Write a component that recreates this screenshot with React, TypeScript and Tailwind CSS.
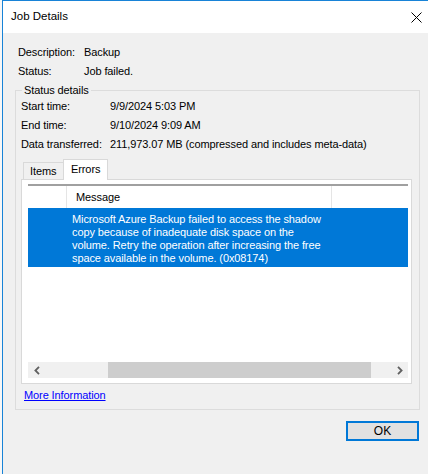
import React from "react";

const font = { fontFamily: '"Liberation Sans", Arial, sans-serif' };

function Chevron({ dir }: { dir: "left" | "right" }) {
  return (
    <svg width="6" height="9" viewBox="0 0 6 9">
      {dir === "left" ? (
        <path d="M5 0.8 L1.4 4.5 L5 8.2" fill="none" stroke="#606060" strokeWidth="1.8" />
      ) : (
        <path d="M1 0.8 L4.6 4.5 L1 8.2" fill="none" stroke="#606060" strokeWidth="1.8" />
      )}
    </svg>
  );
}

export default function App() {
  return (
    <div
      className="w-[428px] h-[474px] flex bg-white overflow-hidden text-[11px] tracking-[-0.1px] text-black"
      style={font}
    >
      <div className="w-[2px] shrink-0 bg-[#f7f7f7]" />
      <div className="flex-1 flex flex-col border-l border-t border-[#1883d7]">
        {/* Title bar */}
        <div className="h-[32px] shrink-0 bg-white flex items-center justify-between pl-[8px] pr-[6px]">
          <span className="text-[11.5px] tracking-normal">Job Details</span>
          <svg width="11" height="11" viewBox="0 0 11 11">
            <path d="M0.5 0.5 L10.5 10.5 M10.5 0.5 L0.5 10.5" stroke="#000" strokeWidth="1" />
          </svg>
        </div>

        {/* Body */}
        <div className="flex-1 bg-[#f0f0f0] flex flex-col pt-[10px]">
          <div className="pl-[15px] flex flex-col">
            <div className="h-[19px] flex items-center">
              <span className="w-[66px]">Description:</span>
              <span>Backup</span>
            </div>
            <div className="h-[19px] flex items-center">
              <span className="w-[66px]">Status:</span>
              <span>Job failed.</span>
            </div>
          </div>

          <fieldset className="ml-[12px] mt-[2px] w-[405px] border border-[#dcdcdc] pb-[6px]">
            <legend className="ml-[6px] px-[2px] leading-[14px]">Status details</legend>
            <div className="pl-[5px] flex flex-col">
              <div className="h-[19px] flex items-center">
                <span className="w-[89px]">Start time:</span>
                <span>9/9/2024 5:03 PM</span>
              </div>
              <div className="h-[19px] flex items-center">
                <span className="w-[89px]">End time:</span>
                <span>9/10/2024 9:09 AM</span>
              </div>
              <div className="h-[19px] flex items-center">
                <span className="w-[89px]">Data transferred:</span>
                <span>211,973.07 MB (compressed and includes meta-data)</span>
              </div>
            </div>

            {/* Tabs */}
            <div className="ml-[5px] mt-[5px] w-[391px] flex flex-col">
              <div className="h-[20px] flex items-end pl-[2px] relative z-10">
                <div className="h-[17px] w-[40px] border-l border-t border-[#d9d9d9] bg-[#f0f0f0] flex items-center pl-[6px] pt-[1px]">
                  Items
                </div>
                <div className="h-[21px] w-[45px] mb-[-1px] border-l border-t border-r border-[#d9d9d9] bg-white flex items-center pl-[7px] pb-[2px]">
                  Errors
                </div>
              </div>
              <div className="h-[205px] border border-[#d9d9d9] bg-white pl-[6px] pr-[3px] pt-[4px] pb-[5px]">
                <div className="h-[194px] flex flex-col">
                  {/* Header */}
                  <div className="h-[24px] shrink-0 border-t-2 border-[#a0a0a0] flex">
                    <div className="w-[39px] border-r border-[#e5e5e5]" />
                    <div className="w-[265px] border-r border-[#e5e5e5] flex items-center pl-[9px]">
                      Message
                    </div>
                    <div className="flex-1" />
                  </div>
                  {/* Selected row */}
                  <div className="h-[59px] shrink-0 bg-[#0078d7] text-white pl-[44px] pt-[5px] leading-[13px]">
                    <div>Microsoft Azure Backup failed to access the shadow</div>
                    <div>copy because of inadequate disk space on the</div>
                    <div>volume. Retry the operation after increasing the free</div>
                    <div>space available in the volume. (0x08174)</div>
                  </div>
                  <div className="flex-1" />
                  {/* Horizontal scrollbar */}
                  <div className="h-[16px] shrink-0 bg-[#f0f0f0] flex">
                    <div className="w-[17px] flex items-center justify-center">
                      <Chevron dir="left" />
                    </div>
                    <div className="flex-1 flex pl-[63px]">
                      <div className="w-[263px] h-full bg-[#cdcdcd]" />
                    </div>
                    <div className="w-[17px] flex items-center justify-center">
                      <Chevron dir="right" />
                    </div>
                  </div>
                </div>
              </div>
            </div>

            <div className="mt-[3px] pl-[8px] h-[16px] flex items-center">
              <span className="text-[#0000ff] underline">More Information</span>
            </div>
          </fieldset>

          <div className="flex justify-end pr-[9px] mt-[11px]">
            <div className="w-[73px] h-[20px] border-2 border-[#0078d7] bg-[#e1e1e1] flex items-center justify-center text-[12px] tracking-normal">
              OK
            </div>
          </div>
        </div>
      </div>
    </div>
  );
}
